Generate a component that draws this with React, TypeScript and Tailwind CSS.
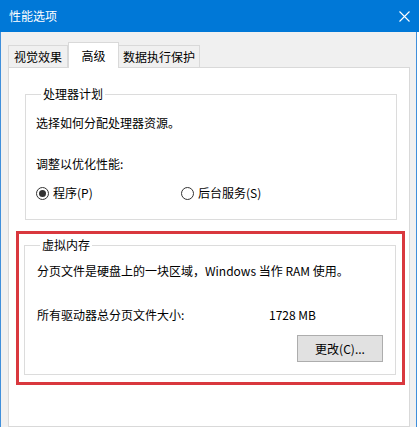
import React from 'react';

const Radio: React.FC<{ checked?: boolean; label: string; className?: string }> = ({ checked, label, className }) => (
  <label className={`flex items-center gap-[4px] ${className ?? ''}`}>
    <span className="w-[13px] h-[13px] rounded-full border border-[#333] bg-white flex items-center justify-center">
      {checked && <span className="w-[7px] h-[7px] rounded-full bg-[#333]" />}
    </span>
    <span>{label}</span>
  </label>
);

const App: React.FC = () => {
  return (
    <div className="w-[419px] h-[427px] bg-white overflow-hidden flex flex-col text-[12px] leading-[16px] text-black font-['Noto_Sans_CJK_SC','Noto_Sans',sans-serif]">
      {/* Title bar */}
      <div className="h-[32px] shrink-0 bg-[#0078d7] flex items-center justify-between pl-[9px] pr-[9px] text-white">
        <span>性能选项</span>
        <svg width="11" height="11" viewBox="0 0 11 11">
          <path d="M0.5 0.5 L10.5 10.5 M10.5 0.5 L0.5 10.5" stroke="#ffffff" strokeWidth="1.1" fill="none" />
        </svg>
      </div>

      {/* Window body */}
      <div className="w-[417px] flex-1 flex flex-col bg-[#f0f0f0] border-x border-[#3f8fdb] pl-[7px] pr-[6px] pt-[10px]">
        {/* Tabs */}
        <div className="flex items-end h-[25px] shrink-0">
          <div className="w-[60px] h-[22px] flex items-center justify-center border border-b-0 border-[#d9d9d9] bg-[#f0f0f0]">视觉效果</div>
          <div className="w-[51px] h-[26px] -mb-px relative z-10 flex items-center justify-center border border-b-0 border-[#d9d9d9] bg-white">高级</div>
          <div className="w-[81px] h-[22px] flex items-center justify-center border border-b-0 border-l-0 border-[#d9d9d9] bg-[#f0f0f0]">数据执行保护</div>
        </div>

        {/* Tab panel */}
        <div className="flex-1 bg-white border border-[#d9d9d9] flex flex-col pt-[18px]">
          <fieldset className="ml-[16px] mr-[12px] border border-[#dcdcdc] pl-[10px] pb-[18px]">
            <legend className="ml-[5px] px-[2px]">处理器计划</legend>
            <div className="mt-[13px]">选择如何分配处理器资源。</div>
            <div className="mt-[25px]">调整以优化性能:</div>
            <div className="mt-[13px] flex">
              <Radio checked label="程序(P)" className="w-[145px]" />
              <Radio label="后台服务(S)" />
            </div>
          </fieldset>

          {/* Highlighted virtual memory section */}
          <div className="mt-[11px] ml-[7px] mr-[4px] border-[3px] border-[#d9383e] pl-[5px] pr-[6px] pt-[3px] pb-[7px]">
            <fieldset className="border border-[#dcdcdc] pl-[12px] pr-[12px] pb-[12px]">
              <legend className="ml-[3px] px-[2px]">虚拟内存</legend>
              <div className="mt-[10px]">分页文件是硬盘上的一块区域，Windows 当作 RAM 使用。</div>
              <div className="mt-[28px] flex">
                <span className="w-[232px]">所有驱动器总分页文件大小:</span>
                <span>1728 MB</span>
              </div>
              <div className="mt-[12px] flex justify-end">
                <button className="w-[86px] h-[27px] bg-[#e1e1e1] border border-[#adadad] flex items-center justify-center">
                  更改(C)...
                </button>
              </div>
            </fieldset>
          </div>
        </div>
      </div>
    </div>
  );
};

export default App;
